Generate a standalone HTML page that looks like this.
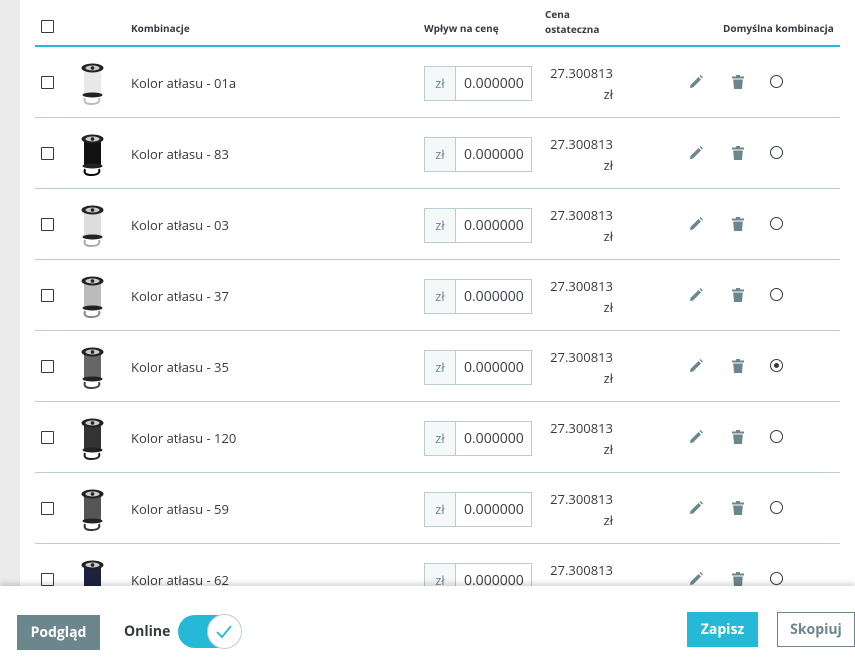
<!DOCTYPE html>
<html><head><meta charset="utf-8"><style>
*{margin:0;padding:0;box-sizing:border-box}
body{width:855px;height:661px;overflow:hidden;background:#fff;font-family:"Open Sans","Liberation Sans",sans-serif;color:#363a41;position:relative}
.strip{position:absolute;left:0;top:0;width:20px;height:590px;background:#ebebeb}
.th{position:absolute;font-size:10px;font-weight:bold;color:#363a41;line-height:15px}
.hline{position:absolute;left:35px;width:805px;top:45px;height:2px;background:#25b9d7}
.row{position:absolute;left:35px;width:805px;height:71px;border-bottom:1px solid #bbcdd2}
.cb{position:absolute;left:6px;width:13px;height:13px;border:1.5px solid #363a41;border-radius:1px;background:#fff}
.img{position:absolute;left:33px;top:8px;width:50px;height:56px}
.name{position:absolute;left:96px;font-size:13px;color:#363a41}
.ig{position:absolute;left:389px;top:19px;width:108px;height:35px;border:1px solid #bbcdd2;display:flex}
.ig .a{width:31px;background:#f5f8f9;border-right:1px solid #bbcdd2;color:#6c868e;font-size:13px;text-align:center;line-height:33px}
.ig .v{flex:1;font-size:14px;line-height:33px;padding-left:8px;color:#363a41}
.pr{position:absolute;left:515px;top:16px;font-size:13px;line-height:21px;text-align:right;width:63px}
.ic{position:absolute;top:28px}
.rad{position:absolute;left:735px;top:28px;width:13px;height:13px;border:1.3px solid #363a41;border-radius:50%}
.rad.on::after{content:"";position:absolute;left:2.5px;top:2.5px;width:5.5px;height:5.5px;border-radius:50%;background:#363a41}
.footer{position:absolute;left:0;top:586px;width:855px;height:75px;background:#fff;box-shadow:0 -3px 5px rgba(0,0,0,.15)}
.btn{position:absolute;font-size:14px;font-weight:bold;text-align:center}
</style></head><body>
<div class="strip"></div>
<div class="cb" style="left:41px;top:20px"></div>
<div class="th" style="left:131px;top:21px">Kombinacje</div>
<div class="th" style="left:424px;top:21px">Wpływ na cenę</div>
<div class="th" style="left:545px;top:7px">Cena<br>ostateczna</div>
<div class="th" style="left:723px;top:21px">Domyślna kombinacja</div>
<div class="hline"></div>

<div id="rows"></div>
<script>
var data=[["01a","#e8e8e8","#bbb"],["83","#111","#000"],["03","#ddd","#aaa"],["37","#bbb","#888"],["35","#666","#444"],["120","#333","#222"],["59","#555","#333"],["62","#1c2340","#111"]];
var h="";
data.forEach(function(d,i){
var top=47+i*71;
h+='<div class="row" style="top:'+top+'px">'+
'<div class="cb" style="top:29px"></div>'+
'<svg class="img" viewBox="0 0 50 56">'+
'<rect x="16" y="14" width="17" height="26" fill="'+d[1]+'"/>'+
'<ellipse cx="24.5" cy="40" rx="10" ry="2.5" fill="#222"/>'+
'<ellipse cx="24.5" cy="13" rx="11" ry="4.5" fill="#222"/><ellipse cx="24.5" cy="13" rx="7" ry="2.5" fill="#ccc"/><circle cx="24.5" cy="13" r="1.8" fill="#222"/>'+
'<path d="M17 43 Q15 49 23 49 Q33 49 31 43" stroke="'+d[2]+'" stroke-width="2" fill="none"/></svg>'+
'<div class="name" style="top:27px">Kolor atłasu - '+d[0]+'</div>'+
'<div class="ig"><div class="a">zł</div><div class="v">0.000000</div></div>'+
'<div class="pr">27.300813<br>zł</div>'+
'<svg class="ic" style="left:654px" width="14" height="14" viewBox="0 0 14 14"><path d="M1 13 L1.5 10 L9.5 2 L12 4.5 L4 12.5 Z" fill="#6c868e"/><path d="M10.5 1 L11.5 0 L14 2.5 L13 3.5Z" fill="#6c868e"/></svg>'+
'<svg class="ic" style="left:697px" width="12" height="14" viewBox="0 0 12 14"><rect x="0" y="1.5" width="12" height="2" fill="#6c868e"/><rect x="4" y="0" width="4" height="2" fill="#6c868e"/><path d="M1.2 4.5 H10.8 L10 14 H2 Z" fill="#6c868e"/></svg>'+
'<div class="rad'+(i==4?' on':'')+'"></div></div>';
});
document.getElementById("rows").innerHTML=h;
</script>

<div class="footer">
<div class="btn" style="left:17px;top:29px;width:83px;height:35px;background:#6c868e;color:#fff;line-height:35px">Podgląd</div>
<div class="btn" style="left:124px;top:36px;color:#363a41">Online</div>
<div style="position:absolute;left:178px;top:29px;width:62px;height:33px;border-radius:17px;background:#25b9d7"></div>
<div style="position:absolute;left:207px;top:28px;width:35px;height:35px;border-radius:50%;background:#fff;border:1px solid #bbcdd2"></div>
<svg style="position:absolute;left:215px;top:38px" width="18" height="16" viewBox="0 0 18 16"><path d="M2 8 L7 13 L16 2" stroke="#25b9d7" stroke-width="1.8" fill="none"/></svg>
<div class="btn" style="left:687px;top:26px;width:71px;height:35px;background:#25b9d7;color:#fff;line-height:35px">Zapisz</div>
<div class="btn" style="left:777px;top:26px;width:78px;height:35px;border:1px solid #6c868e;color:#6c868e;line-height:33px">Skopiuj</div>
</div>
</body></html>
